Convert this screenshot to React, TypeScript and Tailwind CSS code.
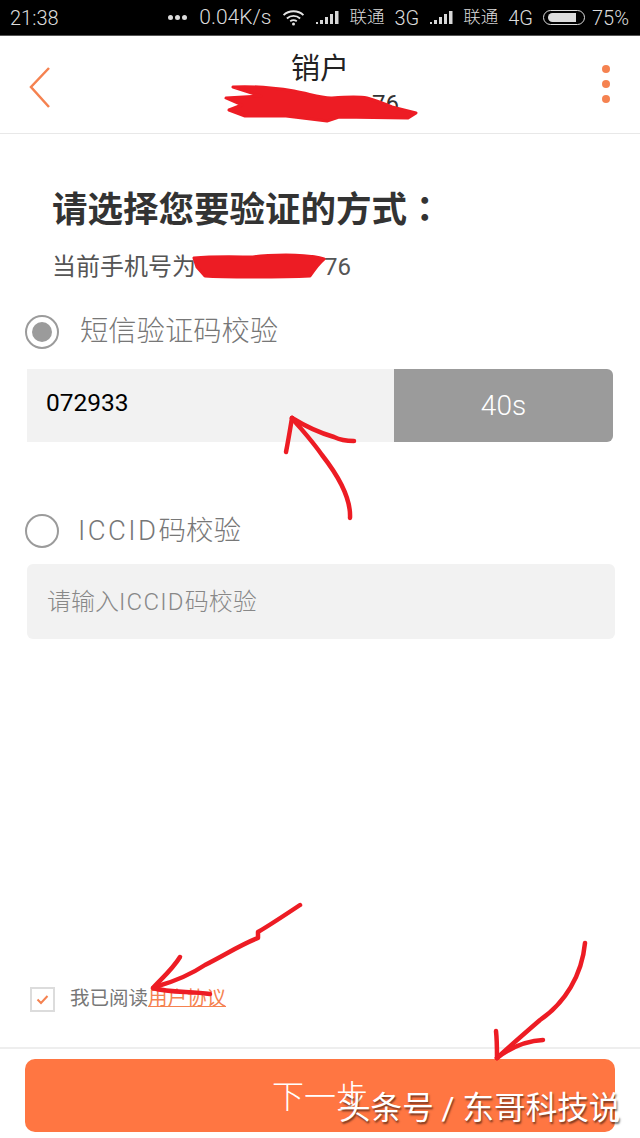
const cjk = 'font-["Roboto","Noto_Sans_CJK_SC",sans-serif]'

function SignalIcon() {
  return (
    <svg width="23" height="15" viewBox="0 0 23 15" fill="#d8d8d8" className="shrink-0">
      <rect x="0" y="12" width="2" height="2" />
      <rect x="4" y="10" width="3" height="4" />
      <rect x="9" y="7" width="3" height="7" />
      <rect x="14" y="4" width="3" height="10" />
      <rect x="19" y="1" width="3.5" height="13" />
    </svg>
  )
}

function WifiIcon() {
  return (
    <svg width="23" height="17" viewBox="0 0 24 18" fill="none" stroke="#e4e4e4" strokeWidth="2" className="shrink-0">
      <path d="M1.5 6.5C7 1 17 1 22.5 6.5" />
      <path d="M5 10C9 6.3 15 6.3 19 10" />
      <path d="M8.5 13C10.5 11.6 13.5 11.6 15.5 13" />
      <circle cx="12" cy="15.8" r="1.6" fill="#e4e4e4" stroke="none" />
    </svg>
  )
}

function StatusBar() {
  return (
    <div className="flex h-9 shrink-0 items-center justify-between border-b border-[#555] bg-black pl-[10px] pr-[11px] text-[20px] font-light text-[#dcdcdc]">
      <span>21:38</span>
      <div className="flex items-center">
        <span className="mr-[12px] flex gap-[2px]">
          <i className="h-[5px] w-[5px] rounded-full bg-[#dcdcdc]" />
          <i className="h-[5px] w-[5px] rounded-full bg-[#dcdcdc]" />
          <i className="h-[5px] w-[5px] rounded-full bg-[#dcdcdc]" />
        </span>
        <span className="text-[21px]">0.04K/s</span>
        <span className="ml-[11px]"><WifiIcon /></span>
        <span className="ml-[11px]"><SignalIcon /></span>
        <span className="ml-[10px] text-[17.5px]">联通</span>
        <span className="ml-[10px]">3G</span>
        <span className="ml-[11px]"><SignalIcon /></span>
        <span className="ml-[10px] text-[17.5px]">联通</span>
        <span className="ml-[10px]">4G</span>
        <span className="ml-[10px] flex h-[15px] w-[42px] items-center rounded-full border border-[#dcdcdc] px-[4px]">
          <i className="h-[9px] w-[28px] rounded-l-full bg-[#dcdcdc]" />
        </span>
        <span className="ml-[7px]">75%</span>
      </div>
    </div>
  )
}

function Header() {
  return (
    <div className="flex h-[98px] shrink-0 items-start justify-between border-b border-[#e8e8e8] bg-white pl-[24px] pr-[30px]">
      <svg width="30" height="44" viewBox="0 0 30 44" fill="none" stroke="#f58250" strokeWidth="2.5" className="mt-[29px]">
        <path d="M25 3L7 22L25 42" />
      </svg>
      <div className="flex w-[200px] flex-col items-center">
        <span className="mr-[16px] mt-[14px] text-[29px] leading-[38px] text-[#222]">销户</span>
        <span className="mt-[2px] self-end pr-[29px] text-[24px] leading-[28px] text-[#333]">76</span>
      </div>
      <div className="mt-[29px] flex w-[8px] flex-col gap-[7px]">
        <i className="h-[8px] w-[8px] rounded-full bg-[#f58250]" />
        <i className="h-[8px] w-[8px] rounded-full bg-[#f58250]" />
        <i className="h-[8px] w-[8px] rounded-full bg-[#f58250]" />
      </div>
    </div>
  )
}

function Radio({ checked }: { checked?: boolean }) {
  return (
    <span className="flex h-[34px] w-[34px] shrink-0 items-center justify-center rounded-full border-2 border-[#9b9b9b] bg-white">
      {checked && <i className="h-[20px] w-[20px] rounded-full bg-[#9b9b9b]" />}
    </span>
  )
}

// hand drawn red marks that sit on top of the screenshot
function Scribbles() {
  return (
    <svg className="pointer-events-none absolute inset-0" width="640" height="1138" viewBox="0 0 640 1138" fill="none" stroke="#ed1c24" strokeLinecap="round" strokeLinejoin="round">
      <path fill="#ed1c24" strokeWidth="3" d="M233 87C250 86 275 88 294 91C310 94 320 98 331 98C345 97 358 96 367 98C378 101 385 104 392 107L416 113L408 118L339 117L327 121L286 116L245 116L229 110L242 105L226 98L261 96Z" />
      <path fill="#ed1c24" strokeWidth="3" d="M194 258C215 256 240 257 253 257C265 255 280 255 286 255C298 255 314 256 324 259C318 264 314 270 310 276C290 277 270 277 253 277C236 277 218 277 205 276L197 267Z" />
      <g strokeWidth="4.5">
        <path d="M350 518C351 500 340 478 322 455C310 438 300 428 292 418" />
        <path d="M292 418C290 430 288 442 286 452" />
        <path d="M292 418C305 426 320 433 334 437C340 440 348 441 354 441" />
        <path d="M300 905C285 915 270 925 258 932L258 938C240 945 225 955 205 965C190 975 172 982 158 986" />
        <path d="M180 957C172 970 160 980 153 988" />
        <path d="M153 988C170 993 190 991 210 994" />
        <path d="M585 943C582 975 565 1003 540 1020C525 1033 510 1046 497 1058" />
        <path d="M496 1031C497 1040 497 1050 497 1058" />
        <path d="M497 1058C510 1048 525 1041 543 1040" />
      </g>
    </svg>
  )
}

export default function App() {
  return (
    <div className={`relative flex h-[1138px] w-[640px] flex-col overflow-hidden bg-white ${cjk}`}>
      <StatusBar />
      <Header />

      <div className="flex flex-1 flex-col">
        <h1 className="ml-[52px] mt-[50px] text-[35.5px] font-bold leading-[46px] text-[#333]">
          请选择您要验证的方式<span className='font-["Noto_Sans_CJK_TC"]'>：</span>
        </h1>
        <p className="ml-[52px] mt-[17px] text-[24px] leading-[34px] text-[#555]">
          当前手机号为<span className="ml-[128px]">76</span>
        </p>

        <div className="ml-[25px] mt-[28px] flex items-center gap-[21px]">
          <Radio checked />
          <span className="text-[28.3px] font-light leading-[40px] text-[#777]">短信验证码校验</span>
        </div>

        <div className="ml-[27px] mr-[27px] mt-[17px] flex h-[73px] overflow-hidden rounded-r-[6px]">
          <div className="flex flex-1 items-center bg-[#f2f2f2] pb-[4px] pl-[19px] text-[24.5px] text-black">072933</div>
          <div className="flex w-[219px] items-center justify-center bg-[#9b9b9b] text-[28px] font-light text-white">40s</div>
        </div>

        <div className="ml-[25px] mt-[69px] flex items-center gap-[19px]">
          <Radio />
          <span className="text-[27.5px] font-light leading-[40px] text-[#777]">
            <span className="tracking-[2.4px]">ICCID</span>码校验
          </span>
        </div>

        <div className="ml-[27px] mr-[25px] mt-[13px] flex h-[75px] items-center rounded-[6px] bg-[#f2f2f2] pl-[20px] text-[24px] font-light text-[#888]">
          请输入<span className="tracking-[1.2px]">ICCID</span>码校验
        </div>

        <div className="flex-1" />

        <div className="ml-[30px] flex items-center gap-[15px] pb-[35px]">
          <span className="flex h-[25px] w-[25px] items-center justify-center border-2 border-[#dcdcdc]">
            <svg width="13" height="11" viewBox="0 0 13 11" fill="none" stroke="#f58250" strokeWidth="2">
              <path d="M1.5 5.5L5 9L11.5 2" />
            </svg>
          </span>
          <span className="text-[19.5px] leading-[26px] text-[#777]">
            我已阅读<span className="text-[#f58250] underline">用户协议</span>
          </span>
        </div>

        <div className="h-[91px] shrink-0 border-t-2 border-[#eeeeee] px-[25px] pt-[10px]">
          <button className="flex h-[73px] w-full items-center justify-center rounded-[10px] bg-[#ff7642] pt-[2px] text-[32px] font-light text-white">下一步</button>
        </div>
      </div>

      <Scribbles />
      <span className="absolute left-[339px] top-[1087px] text-[31.6px] leading-[44px] text-white [text-shadow:1px_2px_2px_rgba(0,0,0,0.55)]">头条号 / 东哥科技说</span>
    </div>
  )
}
